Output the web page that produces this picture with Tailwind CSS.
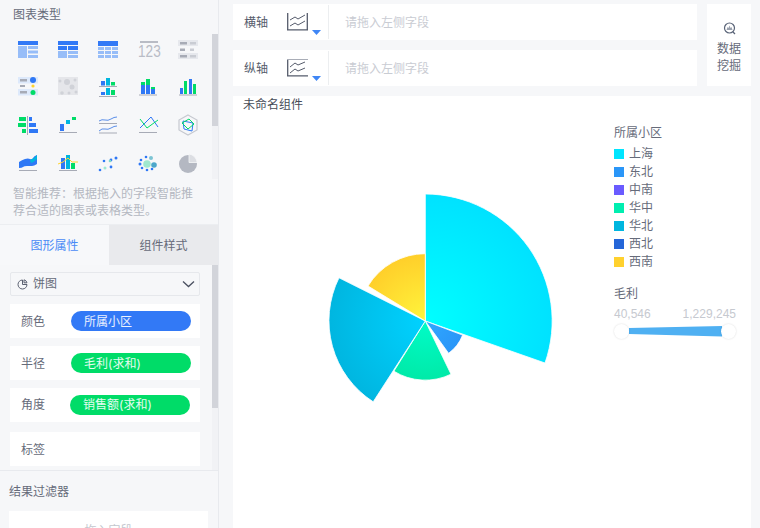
<!doctype html>
<html lang="zh">
<head>
<meta charset="utf-8">
<script src="https://cdn.jsdelivr.net/npm/@tailwindcss/browser@4"></script>
</head>
<body class="m-0 overflow-hidden bg-[#f6f7f9] font-['Inter','Noto_Sans_CJK_SC',sans-serif]">
<div class="flex w-[760px] h-[528px] overflow-hidden">
  <!-- sidebar -->
  <aside class="flex flex-col w-[219px] h-[528px] shrink-0 border-r border-[#e8eaee] bg-[#f6f7f9] text-[12px] text-[#666b7a]">
    <section class="relative h-[224px] shrink-0">
      <h2 class="pt-[7px] pl-[13px] text-[12px] leading-[16px] font-normal text-[#666b7a]">图表类型</h2>
      <div class="absolute right-0 top-[34px] w-[6px] h-[145px] bg-[#f1f2f5]"><div class="h-[92px] bg-[#d2d4da]"></div></div>
      <div class="grid grid-cols-[40px_40px_40px_40px_40px] grid-rows-[37px_38px_37px_40px] pl-[8px] pt-[12px]">
        <!-- r1 -->
        <svg class="w-[40px] h-[40px]" viewBox="0 0 40 40"><rect x="10" y="6" width="20" height="4" fill="#3279f6"/><rect x="10" y="11" width="9" height="12" fill="#97bdf8"/><rect x="20" y="11" width="10" height="3" fill="#97bdf8"/><rect x="20" y="15.500" width="10" height="3" fill="#97bdf8"/><rect x="20" y="20" width="10" height="3" fill="#97bdf8"/></svg>
        <svg class="w-[40px] h-[40px]" viewBox="0 0 40 40"><rect x="10" y="6" width="20" height="4" fill="#3279f6"/><rect x="10" y="11" width="9" height="4" fill="#3279f6"/><rect x="20" y="11" width="10" height="4" fill="#3279f6"/><rect x="10" y="16" width="9" height="7" fill="#97bdf8"/><rect x="20" y="16" width="10" height="3" fill="#97bdf8"/><rect x="20" y="20" width="10" height="3" fill="#97bdf8"/></svg>
        <svg class="w-[40px] h-[40px]" viewBox="0 0 40 40"><rect x="10" y="6" width="20" height="5" fill="#3279f6"/><g fill="#97bdf8"><rect x="10" y="12" width="6" height="3"/><rect x="17" y="12" width="6" height="3"/><rect x="24" y="12" width="6" height="3"/><rect x="10" y="16" width="6" height="3"/><rect x="17" y="16" width="6" height="3"/><rect x="24" y="16" width="6" height="3"/><rect x="10" y="20" width="6" height="3"/><rect x="17" y="20" width="6" height="3"/><rect x="24" y="20" width="6" height="3"/></g></svg>
        <div class="w-[40px] h-[40px] flex flex-col items-center pt-[6px] pl-[2px]"><div class="w-[18px] h-[2px] bg-[#b9bcc5]"></div><span class="text-[16px] leading-[15px] mt-[1px] text-[#b9bcc6] font-['Liberation_Sans'] scale-x-[0.85]">123</span></div>
        <svg class="w-[40px] h-[40px]" viewBox="0 0 40 40"><rect x="10" y="5" width="20" height="6" fill="#e6e8ed"/><rect x="10" y="18" width="20" height="6" fill="#e6e8ed"/><g fill="#a7abb6"><rect x="12" y="7" width="7" height="2.500"/><rect x="12" y="13.500" width="5" height="2.500"/><rect x="12" y="20" width="7" height="2.500"/></g><g fill="#c9ccd3"><rect x="22" y="7" width="6" height="2.500"/><rect x="22" y="13.500" width="4" height="2.500"/><rect x="22" y="20" width="6" height="2.500"/></g></svg>
        <!-- r2 -->
        <svg class="w-[40px] h-[40px]" viewBox="0 0 40 40"><rect x="10" y="5" width="20" height="6.500" fill="#dde9fb"/><rect x="10" y="17" width="20" height="6.500" fill="#dde9fb"/><g fill="#a7abb6"><rect x="12" y="7" width="7" height="2.500"/><rect x="12" y="13" width="5" height="2"/><rect x="12" y="19" width="7" height="2.500"/></g><circle cx="25" cy="8" r="3" fill="#2f78f5"/><circle cx="25" cy="14" r="1.600" fill="#ffd42e"/><circle cx="25" cy="20.500" r="2.500" fill="#00dc68"/></svg>
        <svg class="w-[40px] h-[40px]" viewBox="0 0 40 40"><rect x="10" y="5" width="20" height="18" fill="#e5e6ea"/><g fill="#d0d2d8"><circle cx="19" cy="10" r="3"/><circle cx="24" cy="15" r="2.500"/><circle cx="12" cy="9" r="1.500"/><circle cx="14" cy="21" r="1.800"/><circle cx="27" cy="8" r="1.500"/><circle cx="21" cy="21" r="1.500"/><circle cx="28" cy="20" r="1.500"/></g></svg>
        <svg class="w-[40px] h-[40px]" viewBox="0 0 40 40"><rect x="13" y="9" width="4" height="4.500" fill="#2f78f5"/><rect x="18" y="6" width="4" height="7.500" fill="#00b6df"/><rect x="23" y="10" width="4" height="3.500" fill="#00dc68"/><rect x="11" y="14" width="18" height="1" fill="#a7abb6"/><rect x="13" y="20" width="4" height="3" fill="#2f78f5"/><rect x="18" y="16" width="4" height="7" fill="#00b6df"/><rect x="23" y="18" width="4" height="5" fill="#00dc68"/><rect x="11" y="24" width="18" height="1" fill="#a7abb6"/></svg>
        <svg class="w-[40px] h-[40px]" viewBox="0 0 40 40"><rect x="13" y="13" width="4" height="9" fill="#2f78f5"/><rect x="13" y="10" width="4" height="3" fill="#00dc68"/><rect x="18" y="13" width="4" height="9" fill="#2f78f5"/><rect x="18" y="7" width="4" height="6" fill="#00dc68"/><rect x="23" y="17" width="4" height="5" fill="#2f78f5"/><rect x="23" y="15" width="4" height="2" fill="#00dc68"/><rect x="11" y="22.500" width="18" height="1" fill="#a7abb6"/></svg>
        <svg class="w-[40px] h-[40px]" viewBox="0 0 40 40"><rect x="12" y="16" width="3" height="6" fill="#2f78f5"/><rect x="16" y="9" width="3" height="13" fill="#00dc68"/><rect x="21" y="7" width="3" height="15" fill="#2f78f5"/><rect x="25" y="12" width="3" height="10" fill="#00dc68"/><rect x="11" y="22.500" width="18" height="1" fill="#a7abb6"/></svg>
        <!-- r3 -->
        <svg class="w-[40px] h-[40px]" viewBox="0 0 40 40"><rect x="19" y="6" width="1" height="19" fill="#a7abb6"/><g fill="#00dc68"><rect x="11" y="7" width="7" height="4"/><rect x="10" y="13" width="8" height="4"/><rect x="14" y="19" width="4" height="4"/></g><g fill="#2f78f5"><rect x="21" y="7" width="3" height="4"/><rect x="21" y="13" width="7" height="4"/><rect x="21" y="19" width="9" height="4"/></g></svg>
        <svg class="w-[40px] h-[40px]" viewBox="0 0 40 40"><rect x="12" y="14" width="4" height="7" fill="#2f78f5"/><rect x="18" y="10" width="4" height="4" fill="#00b6df"/><rect x="24" y="7" width="4" height="3" fill="#00dc68"/><rect x="11" y="22" width="18" height="1" fill="#a7abb6"/></svg>
        <svg class="w-[40px] h-[40px]" viewBox="0 0 40 40" fill="none"><path d="M11 11q3-2 6-1t6-1 6-2M11 21q3-3 6-2t6-1 6-2" stroke="#5b8fea" stroke-width="1"/><path d="M11 13.500h18M11 23h18" stroke="#a7abb6" stroke-width="1"/></svg>
        <svg class="w-[40px] h-[40px]" viewBox="0 0 40 40" fill="none"><path d="M12 18L23 7l7 10" stroke="#2f78f5" stroke-width="1"/><path d="M12 9l7 9 11-8" stroke="#00dc68" stroke-width="1"/><path d="M11 22.500h18" stroke="#a7abb6"/></svg>
        <svg class="w-[40px] h-[40px]" viewBox="0 0 40 40" fill="none"><path d="M20 5l9 5v10l-9 5-9-5v-10z" stroke="#c6c9d0" stroke-width="1.200"/><path d="M15 11l10 2-1 8-8-2z" stroke="#2f78f5" stroke-width="1"/><path d="M14 13l7-4 5 5-6 5z" stroke="#00dc68" stroke-width="1"/></svg>
        <!-- r4 -->
        <svg class="w-[40px] h-[40px]" viewBox="0 0 40 40"><path d="M11 15q3-2 6-3t5 0 3-1 4-3v9q-3 2-5 2t-5 0-4 1-4 1z" fill="#2f78f5"/><path d="M22 13q4-1 7-5v4q-3 3-6 4z" fill="#00b6df"/><rect x="11" y="23" width="18" height="1" fill="#a7abb6"/></svg>
        <svg class="w-[40px] h-[40px]" viewBox="0 0 40 40"><rect x="13" y="11" width="4" height="11" fill="#2f78f5"/><rect x="18" y="8" width="4" height="14" fill="#00b6df"/><rect x="23" y="16" width="4" height="6" fill="#00dc68"/><path d="M10 17l5-2 5-4 4 4 6 0" fill="none" stroke="#ffd42e" stroke-width="1"/><rect x="11" y="23" width="18" height="1" fill="#a7abb6"/></svg>
        <svg class="w-[40px] h-[40px]" viewBox="0 0 40 40"><circle cx="12" cy="23" r="1.300" fill="#2f78f5"/><circle cx="16" cy="14" r="1.300" fill="#2f78f5"/><circle cx="23" cy="13" r="1.400" fill="#2f78f5"/><circle cx="28" cy="11" r="1.500" fill="#2f78f5"/><circle cx="23" cy="20" r="1.400" fill="#2f78f5"/><circle cx="17" cy="21" r="1.500" fill="#9fe8d2"/><circle cx="22" cy="14" r="1.300" fill="#7cd8cc"/></svg>
        <svg class="w-[40px] h-[40px]" viewBox="0 0 40 40"><circle cx="19" cy="17" r="3.800" fill="#9fe8cf"/><circle cx="26" cy="18" r="2.800" fill="#4ca7ca"/><circle cx="23" cy="11" r="2" fill="#7cc4d4"/><circle cx="18" cy="10" r="1.300" fill="#2f78f5"/><circle cx="13" cy="13" r="1.300" fill="#2f78f5"/><circle cx="12" cy="17" r="1.500" fill="#2f78f5"/><circle cx="14" cy="21" r="1.300" fill="#2f78f5"/><circle cx="19" cy="23" r="1.300" fill="#2f78f5"/><circle cx="24" cy="22" r="1.300" fill="#2f78f5"/></svg>
        <svg class="w-[40px] h-[40px]" viewBox="0 0 40 40"><circle cx="20" cy="17" r="9" fill="#b4b8c2"/><path d="M21 7a9 9 0 0 1 8 8.500h-8z" fill="#dcdee3" stroke="#f6f7f9" stroke-width="0.800"/></svg>
      </div>
      <p class="absolute left-[13px] top-[185px] w-[190px] text-[12px] leading-[17px] text-[#b4b8c1]">智能推荐：根据拖入的字段智能推荐合适的图表或表格类型。</p>
    </section>
    <div class="flex h-[41px] shrink-0 border-t border-[#eceef1] text-[12px]">
      <div class="w-[109px] flex items-center justify-center pt-[1px] text-[#4a8bf6] bg-[#f7f8fa]">图形属性</div>
      <div class="flex-1 flex items-center justify-center pt-[1px] text-[#666b7a] bg-[#e9eaed]">组件样式</div>
    </div>
    <section class="relative h-[205px] shrink-0 overflow-hidden pl-[10px] pr-[18px] pt-[7px]">
      <div class="absolute right-0 top-0 w-[6px] h-[205px] bg-[#f1f2f5]"><div class="h-[143px] bg-[#d2d4da]"></div></div>
      <div class="flex items-center h-[24px] border border-[#e6e8ec] rounded-[2px] pl-[6px] pr-[4px]">
        <svg class="w-[11px] h-[11px] mr-[5px]" viewBox="0 0 11 11" fill="none" stroke="#5a6070" stroke-width="1"><path d="M5.500 1a4.500 4.500 0 1 0 4.500 4.500H5.500zM7 .8a4 4 0 0 1 3 3H7z"/></svg>
        <span>饼图</span>
        <svg class="ml-auto w-[13px] h-[9px]" viewBox="0 0 13 9" fill="none" stroke="#4a5060" stroke-width="1.300"><path d="M1 1.500l5.500 5 5.500-5"/></svg>
      </div>
      <div class="flex items-center h-[34px] mt-[8px] bg-white pl-[11px]"><span class="w-[50px] pt-[1px]">颜色</span><span class="w-[120px] h-[20px] leading-[21px] pl-[13px] rounded-full bg-[#3279f6] text-white/90">所属小区</span></div>
      <div class="flex items-center h-[34px] mt-[8px] bg-white pl-[11px]"><span class="w-[50px] pt-[1px]">半径</span><span class="w-[120px] h-[20px] leading-[21px] pl-[13px] rounded-full bg-[#00dc68] text-white/90">毛利(求和)</span></div>
      <div class="flex items-center h-[34px] mt-[8px] bg-white pl-[11px]"><span class="w-[49px]">角度</span><span class="w-[120px] h-[20px] leading-[20px] pl-[13px] rounded-full bg-[#00dc68] text-white/90">销售额(求和)</span></div>
      <div class="flex items-center h-[34px] mt-[10px] bg-white pl-[11px]"><span class="pt-[1px]">标签</span></div>
    </section>
    <section class="border-t border-[#e8eaee] pt-[13px] pl-[9px] pr-[10px] flex-1 overflow-hidden">
      <h2 class="text-[12px] leading-[16px] font-normal">结果过滤器</h2>
      <div class="h-[40px] mt-[11px] bg-white text-center pt-[12px] leading-[16px] text-[#c4c7ce]">拖入字段</div>
    </section>
  </aside>
  <!-- main -->
  <main class="flex-1 flex flex-col pl-[14px] pr-[9px] pt-[4px] min-w-0">
    <div class="flex gap-[10px] h-[82px] shrink-0">
      <div class="flex-1 flex flex-col gap-[10px]">
        <div class="flex items-center h-[36px] bg-white text-[12px] text-[#565c6c]">
          <span class="pl-[11px] w-[54px] pt-[1px]">横轴</span>
          <svg class="w-[21px] h-[18px] mb-[1px]" viewBox="0 0 21 18" fill="none" stroke="#565c6c"><path d="M.7 0v17M0 16.800h21M20.300 0v17" stroke-width="1.300"/><path d="M3 7l5-3 3 2 7-4M3 13l5-3 3 2 7-4" stroke-width="1"/></svg>
          <svg class="w-[9px] h-[5px] ml-[4px] mt-[20px]" viewBox="0 0 9 5"><path d="M0 0h9L4.500 5z" fill="#3f86f5"/></svg>
          <span class="h-[34px] ml-[7px] border-l border-[#eceef0]"></span>
          <span class="pl-[16px] pt-[1px] text-[#c9ccd3]">请拖入左侧字段</span>
        </div>
        <div class="flex items-center h-[36px] bg-white text-[12px] text-[#565c6c]">
          <span class="pl-[11px] w-[54px] pt-[1px]">纵轴</span>
          <svg class="w-[21px] h-[18px] mb-[1px]" viewBox="0 0 21 18" fill="none" stroke="#565c6c"><path d="M.7 0v17M0 16.800h21" stroke-width="1.300"/><path d="M0 .5h21" stroke="#a9adb7" stroke-width="1"/><path d="M3 8l5-4 3 2 7-3M3 14l5-4 3 2 7-3" stroke-width="1"/></svg>
          <svg class="w-[9px] h-[5px] ml-[4px] mt-[20px]" viewBox="0 0 9 5"><path d="M0 0h9L4.500 5z" fill="#3f86f5"/></svg>
          <span class="h-[34px] ml-[7px] border-l border-[#eceef0]"></span>
          <span class="pl-[16px] pt-[1px] text-[#c9ccd3]">请拖入左侧字段</span>
        </div>
      </div>
      <div class="w-[44px] bg-white flex flex-col items-center pt-[18px] text-[12px] leading-[17px] text-[#666b7a]">
        <svg class="w-[13px] h-[13px] mb-[5px]" viewBox="0 0 13 13" fill="none"><circle cx="6.500" cy="6" r="5" stroke="#5a6478" stroke-width="1.200"/><path d="M3.500 8l1-3 1 1 1-2.500 1 2.500 1-1 1 3z" fill="#9aa1ae"/><path d="M10 10l2 2" stroke="#5a6478" stroke-width="1.200"/></svg>
        <span>数据</span><span>挖掘</span>
      </div>
    </div>
    <div class="flex-1 mt-[10px] bg-white flex flex-col">
      <h1 class="pl-[10px] pt-[1px] text-[12px] leading-[16px] font-normal text-[#474c58]">未命名组件</h1>
      <div class="flex flex-1">
        <svg class="w-[371px] h-[300px] shrink-0" viewBox="233 113 371 300">
          <defs>
            <radialGradient id="g1" gradientUnits="userSpaceOnUse" cx="425.300" cy="321" r="126"><stop offset="0" stop-color="#00ffff"/><stop offset="1" stop-color="#00e2ff"/></radialGradient>
            <radialGradient id="g2" gradientUnits="userSpaceOnUse" cx="425.300" cy="321" r="40"><stop offset="0" stop-color="#2fa8ff"/><stop offset="1" stop-color="#2a96f8"/></radialGradient>
            <radialGradient id="g3" gradientUnits="userSpaceOnUse" cx="425.300" cy="321" r="59"><stop offset="0" stop-color="#00fcc8"/><stop offset="1" stop-color="#00eaa8"/></radialGradient>
            <radialGradient id="g4" gradientUnits="userSpaceOnUse" cx="425.300" cy="321" r="96"><stop offset="0" stop-color="#00d2ff"/><stop offset="1" stop-color="#00b6e0"/></radialGradient>
            <radialGradient id="g5" gradientUnits="userSpaceOnUse" cx="425.300" cy="321" r="67"><stop offset="0" stop-color="#fff53c"/><stop offset="1" stop-color="#ffcf2a"/></radialGradient>
          </defs>
          <g stroke="#fff" stroke-width="0.800">
            <path d="M425.300 321V194A127 127 0 0 1 545 363z" fill="url(#g1)"/>
            <path d="M425.300 321L462.600 335.100A40 40 0 0 1 448.600 353.300z" fill="url(#g2)"/>
            <path d="M425.300 321L451 374.200A59.200 59.200 0 0 1 393.900 371.200z" fill="url(#g3)"/>
            <path d="M425.300 321L373.200 401.800A96.500 96.500 0 0 1 339 277.800z" fill="url(#g4)"/>
            <path d="M425.300 321L368 286A67.300 67.300 0 0 1 425.300 253.700z" fill="url(#g5)"/>
          </g>
        </svg>
        <div class="pl-[10px] pt-[12px] text-[12px] text-[#666b7a] w-[130px]">
          <div class="leading-[16px] mb-[4px]">所属小区</div>
          <ul class="flex flex-col">
            <li class="flex items-center h-[18px]"><i class="w-[10px] h-[10px] mr-[5px] bg-[#00e5ff]"></i>上海</li>
            <li class="flex items-center h-[18px]"><i class="w-[10px] h-[10px] mr-[5px] bg-[#2a96f8]"></i>东北</li>
            <li class="flex items-center h-[18px]"><i class="w-[10px] h-[10px] mr-[5px] bg-[#6a5bff]"></i>中南</li>
            <li class="flex items-center h-[18px]"><i class="w-[10px] h-[10px] mr-[5px] bg-[#00eeb0]"></i>华中</li>
            <li class="flex items-center h-[18px]"><i class="w-[10px] h-[10px] mr-[5px] bg-[#00b6df]"></i>华北</li>
            <li class="flex items-center h-[18px]"><i class="w-[10px] h-[10px] mr-[5px] bg-[#2566d8]"></i>西北</li>
            <li class="flex items-center h-[18px]"><i class="w-[10px] h-[10px] mr-[5px] bg-[#ffd12e]"></i>西南</li>
          </ul>
          <div class="mt-[15px] leading-[16px]">毛利</div>
          <div class="flex justify-between w-[122px] mt-[5px] leading-[14px] text-[#c6c9d0] font-['Liberation_Sans']"><span>40,546</span><span>1,229,245</span></div>
          <div class="relative w-[122px] h-[16px] mt-[2px]">
            <svg class="absolute left-0 top-0 w-[122px] h-[16px]" viewBox="0 0 122 16"><path d="M15 5V11L108 13.500V3z" fill="#4fb0f2"/></svg>
            <span class="absolute left-0 top-[1px] w-[15px] h-[15px] rounded-full bg-white shadow-[0_0_2px_rgba(0,0,0,0.15)]"></span>
            <span class="absolute right-0 top-[1px] w-[15px] h-[15px] rounded-full bg-white shadow-[0_0_2px_rgba(0,0,0,0.15)]"></span>
          </div>
        </div>
      </div>
    </div>
  </main>
</div>
</body>
</html>
